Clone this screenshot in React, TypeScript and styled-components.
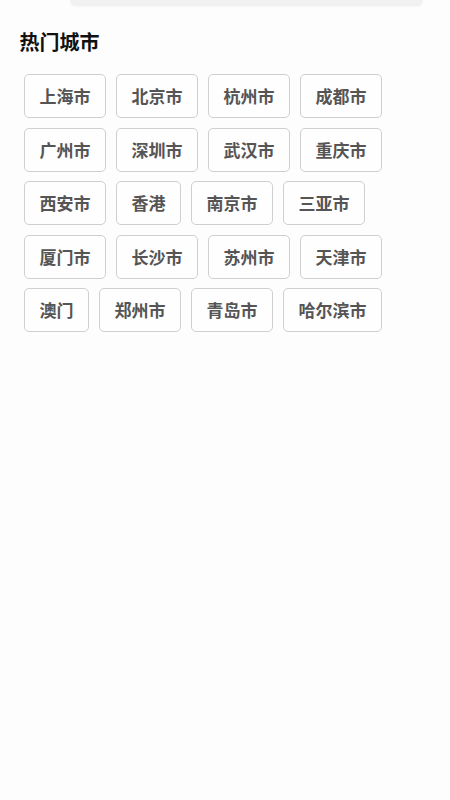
import React from "react";
import styled, { createGlobalStyle } from "styled-components";

const Global = createGlobalStyle`
  html, body {
    margin: 0;
    padding: 0;
    background: #fdfdfd;
  }
  body {
    font-family: "Noto Sans CJK SC", "Noto Sans", sans-serif;
  }
`;

const Page = styled.div`
  width: 450px;
  min-height: 800px;
  background: #fdfdfd;
  display: flex;
  flex-direction: column;
`;

const SearchBarEdge = styled.div`
  margin: 0 27px 0 70px;
  height: 6px;
  background: #f1f1f1;
  border-radius: 0 0 18px 18px;
  box-shadow: 0 1px 3px rgba(0, 0, 0, 0.03);
`;

const Section = styled.section`
  padding: 0 20px 0 19.5px;
  display: flex;
  flex-direction: column;
`;

const Title = styled.h2`
  margin: 22px 0 0 0;
  font-size: 20px;
  line-height: 28px;
  font-weight: 700;
  color: #111;
`;

const CityGrid = styled.div`
  margin: 18px 0 0 4.5px;
  display: flex;
  flex-wrap: wrap;
  gap: 9.5px 10px;
  width: 370px;
`;

const CityButton = styled.button`
  box-sizing: border-box;
  height: 44px;
  padding: 0 14.5px;
  border: 1px solid #cfcfcf;
  border-radius: 5px;
  background: #fefefe;
  color: #555;
  font-family: "Noto Sans CJK SC", "Noto Sans", sans-serif;
  font-size: 17px;
  font-weight: 700;
  line-height: 42px;
  white-space: nowrap;
  cursor: pointer;
`;

const cities = [
  "上海市", "北京市", "杭州市", "成都市",
  "广州市", "深圳市", "武汉市", "重庆市",
  "西安市", "香港", "南京市", "三亚市",
  "厦门市", "长沙市", "苏州市", "天津市",
  "澳门", "郑州市", "青岛市", "哈尔滨市",
];

export default function App() {
  return (
    <Page>
      <Global />
      <SearchBarEdge />
      <Section>
        <Title>热门城市</Title>
        <CityGrid>
          {cities.map((c) => (
            <CityButton key={c}>{c}</CityButton>
          ))}
        </CityGrid>
      </Section>
    </Page>
  );
}
